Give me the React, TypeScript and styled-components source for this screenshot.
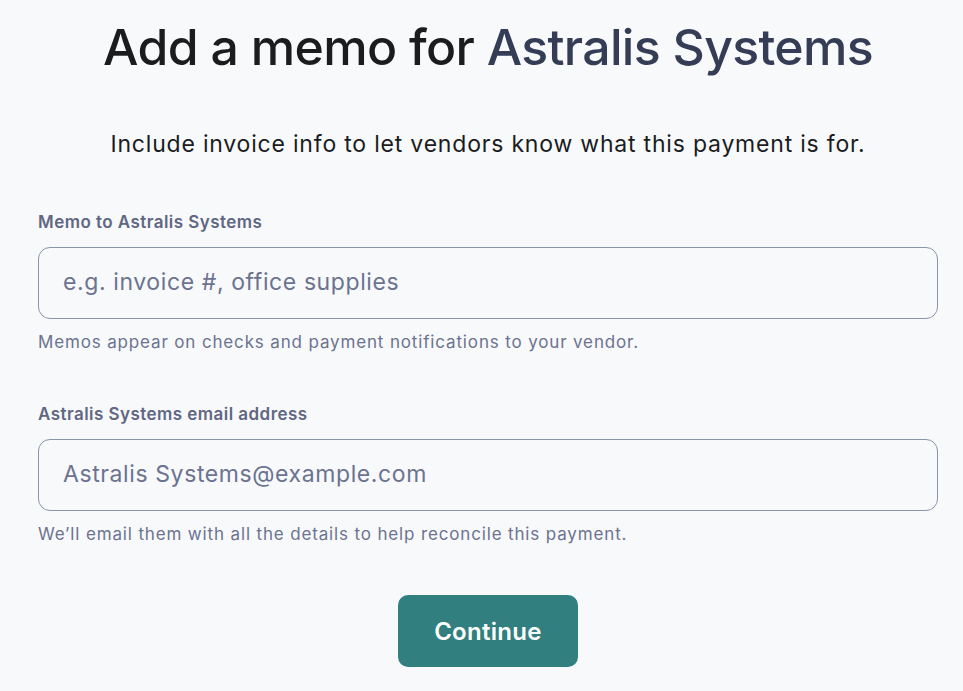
import React from "react";
import styled, { createGlobalStyle } from "styled-components";

const Global = createGlobalStyle`
  html, body { margin: 0; padding: 0; background: #f8f9fb; }
  body { font-family: "Inter", "Noto Sans", sans-serif; }
`;

const Page = styled.div`
  width: 900px;
  margin-left: 38px;
  display: flex;
  flex-direction: column;
  align-items: stretch;
`;

const Title = styled.h1`
  margin: 16px 0 0;
  text-align: center;
  font-size: 50px;
  line-height: 62px;
  font-weight: 500;
  color: #1b1c1e;
  letter-spacing: -0.7px;
`;

const Accent = styled.span`
  color: #343d55;
`;

const Subtitle = styled.p`
  margin: 51px 0 0;
  text-align: center;
  font-size: 23px;
  line-height: 30px;
  letter-spacing: 0.8px;
  color: #1b1c1e;
`;

const Field = styled.div<{ $top: number }>`
  margin-top: ${(p) => p.$top}px;
  display: flex;
  flex-direction: column;
`;

const Label = styled.label`
  margin-top: 2px;
  font-size: 17px;
  line-height: 22px;
  font-weight: 600;
  letter-spacing: 0.45px;
  color: #5f6782;
`;

const Input = styled.input`
  margin-top: 14px;
  box-sizing: border-box;
  height: 72px;
  width: 100%;
  border: 1px solid #8b93a8;
  border-radius: 12px;
  background: #f8f9fb;
  padding: 0 24px 2px;
  font-family: inherit;
  font-size: 23px;
  letter-spacing: 0.6px;
  color: #1b1c1e;
  outline: none;
  &::placeholder { color: #6b7390; }
`;

const Help = styled.div`
  margin-top: 12px;
  font-size: 17px;
  line-height: 22px;
  letter-spacing: 0.85px;
  color: #6b7390;
`;

const ButtonRow = styled.div`
  margin-top: 50px;
  display: flex;
  justify-content: center;
`;

const Button = styled.button`
  width: 180px;
  height: 72px;
  border: none;
  border-radius: 10px;
  background: #317f7e;
  color: #ffffff;
  font-family: inherit;
  font-size: 24px;
  font-weight: 600;
  letter-spacing: 0.3px;
  cursor: pointer;
`;

export default function App() {
  return (
    <>
      <Global />
      <Page>
        <Title>
          Add a memo for <Accent>Astralis Systems</Accent>
        </Title>
        <Subtitle>Include invoice info to let vendors know what this payment is for.</Subtitle>
        <Field $top={50}>
          <Label>Memo to Astralis Systems</Label>
          <Input placeholder="e.g. invoice #, office supplies" />
          <Help>Memos appear on checks and payment notifications to your vendor.</Help>
        </Field>
        <Field $top={48}>
          <Label>Astralis Systems email address</Label>
          <Input placeholder="Astralis Systems@example.com" />
          <Help>We’ll email them with all the details to help reconcile this payment.</Help>
        </Field>
        <ButtonRow>
          <Button>Continue</Button>
        </ButtonRow>
      </Page>
    </>
  );
}
